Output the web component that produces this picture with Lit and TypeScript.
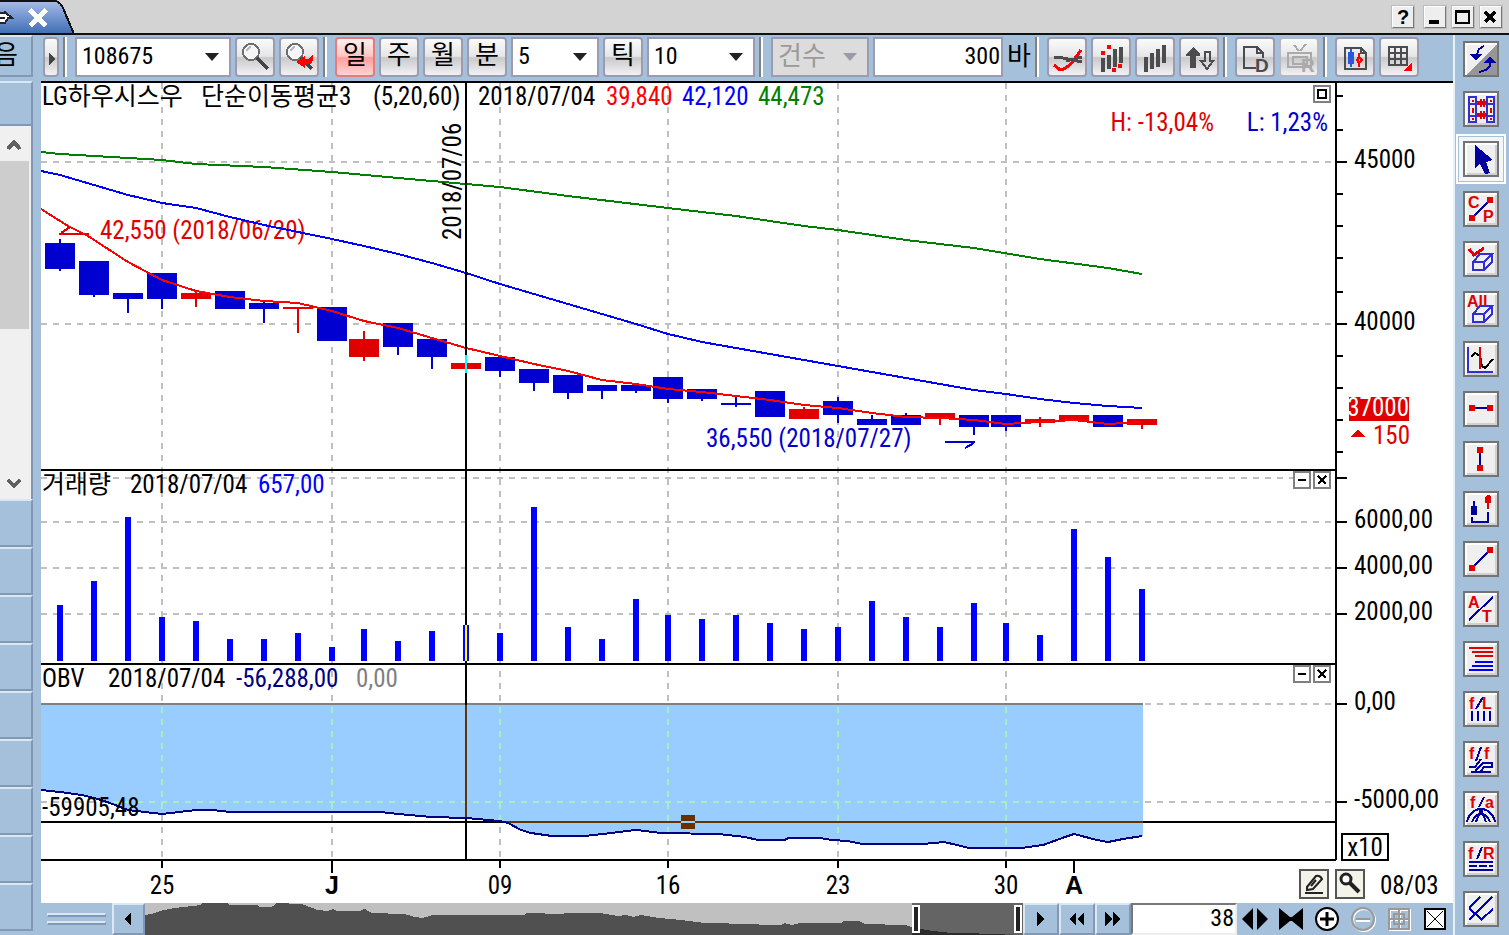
import { LitElement, html, svg, css, nothing } from "lit";
import { customElement, state } from "lit/decorators.js";
import { classMap } from "lit/directives/class-map.js";

type Candle = [x: number, top: number, bottom: number, high: number, low: number, up: 0 | 1];
type Point = [number, number];

const CANDLES: Candle[] = [
  [60, 243, 269, 239, 271, 0], [94, 261, 295, 261, 297, 0], [128, 293, 299, 293, 313, 0],
  [162, 273, 299, 273, 309, 0], [196, 293, 299, 290, 307, 1], [230, 291, 309, 291, 309, 0],
  [264, 303, 309, 301, 323, 0], [298, 307, 309, 307, 333, 1], [332, 307, 341, 307, 341, 0],
  [364, 339, 357, 331, 361, 1], [398, 323, 347, 323, 355, 0], [432, 339, 357, 339, 369, 0],
  [466, 363, 369, 355, 373, 1], [500, 357, 371, 357, 377, 0], [534, 369, 383, 369, 391, 0],
  [568, 375, 393, 375, 399, 0], [602, 385, 391, 385, 399, 0], [636, 385, 391, 383, 393, 0],
  [668, 377, 399, 377, 403, 0], [702, 389, 399, 389, 401, 0], [736, 403, 405, 397, 407, 0],
  [770, 391, 417, 391, 417, 0], [804, 409, 419, 407, 419, 1], [838, 401, 415, 397, 423, 0],
  [872, 419, 425, 415, 425, 0], [906, 415, 425, 413, 425, 0], [940, 413, 419, 413, 425, 1],
  [974, 415, 427, 415, 435, 0], [1006, 415, 427, 415, 431, 0], [1040, 419, 423, 417, 427, 1],
  [1074, 415, 421, 415, 421, 1], [1108, 415, 427, 415, 427, 0], [1142, 419, 425, 419, 429, 1],
];

const VOLUME_TOPS = [
  605, 581, 517, 617, 621, 639, 639, 633, 647, 629, 641, 631, 625, 633, 507, 627, 639, 599, 615, 619, 615,
  623, 629, 627, 601, 617, 627, 603, 623, 635, 529, 557, 589,
];

const MA5: Point[] = [
  [41, 209], [68, 226], [88, 236], [128, 262], [162, 280], [196, 291], [230, 297], [264, 301], [298, 303],
  [332, 311], [364, 321], [398, 328], [432, 338], [466, 348], [500, 356], [534, 364], [568, 371], [602, 380],
  [636, 384], [668, 389], [702, 392], [736, 396], [770, 400], [804, 405], [838, 408], [872, 413], [906, 417],
  [940, 418], [974, 420], [1006, 424], [1040, 422], [1074, 420], [1108, 424], [1142, 422],
];
const MA20: Point[] = [
  [41, 171], [60, 175], [94, 185], [128, 195], [162, 203], [196, 208], [230, 217], [264, 225], [298, 232],
  [332, 239], [364, 246], [398, 254], [432, 263], [466, 273], [500, 284], [534, 294], [568, 304], [602, 314],
  [636, 324], [668, 334], [702, 342], [736, 348], [770, 354], [804, 360], [838, 366], [872, 372], [906, 378],
  [940, 384], [974, 390], [1006, 394], [1040, 399], [1074, 403], [1108, 406], [1142, 408],
];
const MA60: Point[] = [
  [41, 152], [60, 154], [94, 156], [162, 160], [196, 164], [264, 167], [332, 172], [398, 178], [466, 184],
  [500, 187], [568, 196], [668, 208], [736, 216], [804, 226], [838, 230], [906, 240], [974, 248], [1040, 259],
  [1108, 268], [1142, 274],
];
const OBV: Point[] = [
  [41, 790], [60, 792], [82, 795], [98, 799], [110, 803], [128, 810], [145, 812], [162, 814], [196, 810],
  [213, 810], [230, 812], [380, 812], [398, 814], [432, 817], [466, 818], [500, 821], [508, 823], [521, 830],
  [531, 833], [552, 836], [585, 836], [611, 833], [627, 831], [636, 830], [645, 831], [661, 833], [719, 834],
  [745, 837], [758, 840], [785, 840], [788, 838], [820, 838], [832, 840], [847, 841], [863, 844], [923, 844],
  [944, 842], [957, 845], [969, 848], [1021, 848], [1043, 845], [1065, 837], [1074, 834], [1097, 840],
  [1108, 842], [1123, 839], [1142, 836],
];
const OVERVIEW: Point[] = [
  [145, 915], [152, 914], [160, 911], [175, 908], [201, 905], [203, 903], [227, 903], [230, 905], [258, 905],
  [260, 907], [272, 907], [277, 903], [302, 904], [310, 907], [318, 910], [328, 911], [333, 909], [337, 911],
  [360, 911], [365, 909], [372, 913], [405, 914], [415, 917], [423, 918], [433, 915], [525, 915], [527, 913],
  [563, 914], [565, 913], [600, 913], [619, 916], [627, 915], [634, 917], [641, 915], [660, 918], [682, 920],
  [705, 923], [755, 924], [765, 925], [782, 925], [785, 923], [793, 925], [800, 923], [842, 923], [844, 921],
  [860, 921], [866, 924], [906, 925], [913, 927], [922, 929], [934, 931], [953, 933], [1006, 934], [1024, 935],
];

const WEEKS: [number, string, boolean][] = [
  [162, "25", false], [332, "J", true], [500, "09", false], [668, "16", false],
  [838, "23", false], [1006, "30", false], [1074, "A", true],
];

const pts = (p: Point[]) => p.map((q) => q.join(",")).join(" ");

const eraser = (y: number) => svg`<path class="ln-b" d="M10 ${y + 8}h11v8h-11z M10 ${y + 8}l7 -8h12l-8 8 M29 ${y}v8l-8 8"/>`;

const TOOLS: [string, unknown][] = [
  ["화면 전환", svg`<path d="M34 3V34H4z" fill="#969696"/><path class="st-n" d="M21 5l-5 3l-2 5"/><path class="n" d="M6 13h13l-6 7z"/><path class="st-n" d="M16 31l7 -2l4 -4v-3"/><path class="n" d="M21 22h12l-6 -7z"/>`],
  ["차트 비교", svg`<path class="ln-b" d="M6 6h7v25h-7z M24 6h7v25h-7z M5 13h9 M5 25h9 M23 13h9 M23 25h9"/><path class="r" d="M9 9h2v2h-2z M9 17h2v5h-2z M9 27h2v2h-2z M27 9h2v2h-2z M27 17h2v5h-2z M27 27h2v2h-2z M14 10h3v-2h2v2h1v-2h2v2h1v4h-1v2h-2v-2h-1v2h-2v-2h-3z M14 22h3v-2h2v2h1v-2h2v2h1v4h-1v2h-2v-2h-1v2h-2v-2h-3z"/>`],
  ["선택", svg`<path class="n" d="M12 4V27L17 23L22 33L27 32L23 21L30 19z"/>`],
  ["가격 변화선", svg`<path class="st-n" d="M9 27L27 9"/><path class="r" d="M6 24h6v6h-6z M24 6h6v6h-6z"/><text class="glyph-r" x="5" y="17">C</text><text class="glyph-r" x="20" y="31">P</text>`],
  ["선택 삭제", svg`<path class="st-r" d="M6 8l5 6l10 -7"/>${eraser(13)}`],
  ["전체 삭제", svg`<text class="glyph-r" x="4" y="16">All</text>${eraser(15)}`],
  ["수직 기준선", svg`<path class="ln-b" d="M5 6V31H30"/><path d="M8 16l4 -4l5 3l2 10l3 2l8 -9" fill="none" stroke="#000" stroke-width="2"/><path class="r" d="M16 6h2v22h-2z"/>`],
  ["수평선", svg`<path class="st-n" d="M10 17H26"/><path class="r" d="M6 14h6v6h-6z M24 14h6v6h-6z"/>`],
  ["수직선", svg`<path class="st-n" d="M17 10V27"/><path class="r" d="M14 6h6v6h-6z M14 24h6v6h-6z"/>`],
  ["구간 표시", svg`<path class="st-n" d="M11 10v6 M9 26v5H25V21"/><path class="n" d="M8 15h6v9h-6z"/><path class="r" d="M24 4h2l2 2v6h-2v6h-2v-6h-2v-6z"/>`],
  ["추세선", svg`<path class="st-n" d="M9 27L27 9"/><path class="r" d="M6 24h6v6h-6z M24 6h6v6h-6z"/>`],
  ["문자 입력", svg`<path class="st-n" d="M6 29L30 6"/><text class="glyph-r" x="5" y="17">A</text><text class="glyph-r" x="19" y="31">T</text>`],
  ["가격대별 분할", svg`<path class="r" d="M6 6h24v2h-24z M9 10h21v2h-21z M12 14h18v2h-18z"/><path d="M12 20h18v2h-18z M9 24h21v2h-21z M6 28h24v2h-24z" fill="#00f"/>`],
  ["피보나치 라인", svg`<path class="st-n" d="M13 18L20 6 M9 20v10 M15 20v10 M21 20v10 M27 20v10"/><text class="glyph-r" x="6" y="18">f</text><text class="glyph-r" x="19" y="18">L</text>`],
  ["피보나치 팬", svg`<path class="st-n" d="M13 20L18 6 M6 26h6l6 -8 M8 31h20 M12 30l8 -8h9v4h-8l-3 4"/><text class="glyph-r" x="6" y="18">f</text><text class="glyph-r" x="21" y="18">f</text>`],
  ["피보나치 아크", svg`<path class="st-n" d="M16 16L21 6 M4 31c2 -9 8 -13 14 -13s12 4 14 13 M9 31c2 -5 5 -8 9 -8s7 3 9 8 M18 18l-5 13 M18 18l5 13"/><text class="glyph-r" x="7" y="17">f</text><text class="glyph-r" x="22" y="17">a</text>`],
  ["피보나치 되돌림", svg`<path class="st-n" d="M14 18L19 6 M6 21h24 M6 29h24"/><path class="st-n" d="M6 25h24" stroke-dasharray="8 2"/><text class="glyph-r" x="5" y="18">f</text><text class="glyph-r" x="20" y="18">R</text>`],
  ["평행선", svg`<path class="ln-n" d="M6 17L17 6 M6 29L29 6 M18 29L30 18 M6 17L19 29"/>`],
];

const lens = svg`<circle cx="14" cy="13" r="8" fill="#f6f6f6" stroke="#6e6e6e" stroke-width="2"/><path d="M10 12a5 5 0 0 1 4 -4" fill="none" stroke="#bbb" stroke-width="2"/><path d="M20 19l11 11" stroke="#444" stroke-width="4"/>`;

const ICONS = {
  next: svg`<path d="M4 14v12l6 -6z" fill="#444"/>`,
  search: lens,
  back: svg`${lens}<path d="M15 23l9 -6v3h4l4 -5v6l-2 4h-6v4z" fill="#f00"/>`,
  trend: svg`<path d="M5 26l5 4h5l7 -5l10 -14" fill="none" stroke="#f00" stroke-width="3"/><path d="M5 18l9 1l19 4 M17 22l16 -4" fill="none" stroke="#4c4c4c" stroke-width="3"/>`,
  signal: svg`<path d="M8 19h4v14h-4z M14 16h4v14h-4z M20 10h4v18h-4z M26 8h4v16h-4z" fill="#4c4c4c"/><path d="M14 6h4v4h-4z M8 12h4v4h-4z M25 25h4v4h-4z M19 29h4v4h-4z" fill="#f00"/>`,
  bars: svg`<path d="M7 18h4v15h-4z M13 14h4v16h-4z M19 10h4v18h-4z M25 6h4v18h-4z" fill="#4c4c4c"/>`,
  updown: svg`<path d="M12 8l7 7v2h-4v12h-6v-12h-4v-2z" fill="#4c4c4c"/><path d="M24 13h5v9h3l-6 8l-6 -8h4z" fill="none" stroke="#4c4c4c" stroke-width="2"/>`,
  docD: svg`<path d="M19 29H7V8h13l6 6v5 M20 8v6h6" fill="none" stroke="#4c4c4c" stroke-width="2"/><text class="badge" x="18" y="33">D</text>`,
  tvR: svg`<path d="M13 6l5 6 M25 5l-6 7 M7 14h23v14h-23z M12 18h14v7h-14z" fill="none" stroke="#aaa" stroke-width="2"/><text class="badge dim" x="20" y="33">R</text>`,
  docChart: svg`<path d="M8 9h16l5 5v16h-21z M24 9v5h5" fill="none" stroke="#4c4c4c" stroke-width="2"/><path d="M13 10h2v3h2v12h-2v3h-2v-3h-2v-12h2z" fill="#2a56e0"/><path d="M22 14v4 M22 24v4 M20 21l2 -3l3 3l-3 3z" fill="none" stroke="#f00" stroke-width="2"/>`,
  grid: svg`<path d="M8 8h18v18h-18z M14 8v18 M20 8v18 M8 14h18 M8 20h18" fill="none" stroke="#4c4c4c" stroke-width="2"/><path d="M31 23v9h-9z" fill="#f00"/>`,
};

@customElement("app-root")
export class AppRoot extends LitElement {
  @state() private tool = 2;
  @state() private period = "일";

  static styles = css`
    :host {
      --panel: #a4c0da;
      --edge: #8298b4;
      --light: #dbe7f3;
      display: flex;
      flex-direction: column;
      min-height: 100vh;
      background: var(--panel);
      color: #000;
      font: 400 24px "Roboto Condensed", "Noto Sans CJK KR", sans-serif;
    }
    * { box-sizing: border-box; }
    svg { display: block; }
    button { margin: 0; padding: 0; font: inherit; color: inherit; cursor: pointer; }
    button svg { shape-rendering: crispEdges; }

    .titlebar { display: flex; height: 35px; background: #d3d3d3; border-bottom: 2px solid #111; }
    .tab { width: 76px; height: 35px; flex: none; padding: 0; border: 0; background: none; }
    .window { display: flex; flex: 1; justify-content: flex-end; gap: 4px; padding: 5px 6px 0 0; }
    .win { width: 24px; height: 24px; background: #eee; border: 2px solid; border-color: #fff #777 #777 #fff; outline: 1px solid #bbb; outline-offset: -1px; }
    .help { margin-right: 4px; font: 700 20px/20px "Liberation Sans", sans-serif; }

    .body { display: flex; flex: 1; }
    .left { width: 41px; flex: none; display: flex; flex-direction: column; padding-right: 8px; }
    .cell { flex: none; height: 48px; border: 0 solid; border-width: 2px 2px 2px 0; border-color: var(--light) var(--edge) var(--edge); background: none; overflow: hidden; }
    .cell.label { height: 42px; margin-bottom: 4px; display: flex; justify-content: flex-end; align-items: center; padding: 0 13px 2px 0; font-size: 26px; line-height: 30px; }
    .cell.short { height: 45px; }
    .scroll { display: flex; flex-direction: column; height: 373px; background: #f0f0f0; border-right: 2px solid var(--edge); padding-right: 2px; }
    .scroll button { height: 35px; border: 0; background: none; }
    .thumb { height: 168px; background: #cdcdcd; margin-bottom: auto; }

    .main { flex: 1; min-width: 0; display: flex; flex-direction: column; }
    .toolbar { display: flex; gap: 4px; height: 46px; padding: 2px 2px 4px; align-items: center; }
    .tb { width: 40px; height: 40px; flex: none; display: grid; place-items: center; border: 2px solid #9c9cae; border-radius: 4px; background: linear-gradient(#fafafa, #e6e6e8 48%, #c9c9cc 52%, #f2f2f4); overflow: hidden; }
    .tb.period { font-size: 26px; line-height: 30px; padding-bottom: 4px; }
    .tb.slim { width: 16px; }
    .tb.on { border-color: #e47c7c; background: linear-gradient(#fff0f0, #ffc4c4 48%, #ff9c9c 52%, #ffd4d4); }
    .tb:disabled { border-color: #b8b8c4; }
    .sep { width: 4px; height: 40px; flex: none; background: linear-gradient(90deg, #808080 50%, #fff 50%); }
    .sep.wide { margin-right: 4px; }
    .badge { font: 700 19px "Liberation Sans", sans-serif; fill: #4c4c4c; }
    .badge.dim { fill: #aaa; }
    .pick { display: grid; flex: none; align-items: center; }
    .pick > * { grid-area: 1 / 1; }
    .pick svg { justify-self: end; margin-right: 12px; pointer-events: none; }
    .pick.code { width: 156px; }
    .pick.minute { width: 88px; }
    .pick.tick { width: 108px; }
    .pick.count { width: 98px; }
    select, input { appearance: none; width: 100%; height: 40px; margin: 0; padding: 0 5px; border: 2px solid #9c9cae; border-radius: 0; background: #fff; font: inherit; color: #000; }
    .code select, .minute select, .tick select, .bars { padding-bottom: 3px; }
    select:disabled { background: #dcdcdc; color: #9a9a9a; opacity: 1; font-size: 26px; padding-bottom: 2px; }
    .bars { width: 130px; flex: none; text-align: right; padding-right: 1px; }
    .unit { width: 24px; font-size: 26px; line-height: 36px; padding-bottom: 3px; }

    .chart { background: #fff; border-top: 2px solid #000; font-size: 25px; }
    .pane { position: relative; }
    .pane > svg { width: 100%; height: auto; shape-rendering: crispEdges; }
    .pane text { font-size: 25px; }
    .head { position: absolute; top: 0; left: 1px; display: flex; gap: 8px; line-height: 28px; white-space: nowrap; }
    .t0 { width: 151px; }
    .t1 { width: 164px; }
    .args { width: 97px; }
    .t2 { width: 80px; }
    .t3 { width: 58px; }
    .date { width: 120px; }
    .val { width: 68px; }
    .long { width: 112px; }
    .red { color: #f00; }
    .blue { color: #00f; }
    .green { color: #008000; }
    .navy { color: #000080; }
    .gray { color: #808080; }
    .corner { position: absolute; top: 0; right: 122px; display: flex; gap: 2px; }
    .corner.price { top: 2px; }
    .mini { width: 18px; height: 18px; border: 2px solid #808080; background: #fff; }
    .foot { position: absolute; top: 8px; right: 88px; display: flex; gap: 6px; }
    .sq { width: 30px; height: 30px; border: 2px solid #555; background: #f4f3ea; }
    .sq svg { shape-rendering: auto; }

    .gridline { stroke: #c0c0c0; stroke-width: 2; stroke-dasharray: 6 6; }
    .gridline.tint { stroke: #a6f0c0; }
    .ax { stroke: #000; stroke-width: 2; fill: none; }
    .line { fill: none; stroke-width: 2; }
    .up { fill: #e00000; }
    .down { fill: #0000d0; }
    .mid { text-anchor: middle; }
    .end { text-anchor: end; }
    .strong { font: 700 22px "Liberation Sans", sans-serif; }
    .white { fill: #fff; }

    .bottom { display: flex; height: 32px; }
    .grip { width: 71px; flex: none; display: flex; flex-direction: column; justify-content: center; gap: 4px; padding: 0 6px; }
    .grip i { display: block; height: 4px; border: 1px solid; border-color: var(--light) var(--edge) var(--edge) var(--light); border-width: 2px 1px; }
    .nav { width: 36px; flex: none; display: grid; place-items: center; border: 2px solid; border-color: var(--light) var(--edge) var(--edge) var(--light); background: var(--panel); }
    .nav.first { width: 33px; }
    .overview { flex: 1; min-width: 0; }
    .overview svg { width: 100%; height: 32px; shape-rendering: crispEdges; }
    .shown { width: 106px; height: 32px; flex: none; padding: 0 1px 3px; text-align: right; border: 2px solid; border-color: #777 #eee #eee #777; }
    .views { display: flex; }
    .view { width: 36px; border: 0; background: none; display: grid; place-items: center; }
    .view svg { shape-rendering: auto; }

    .right { width: 56px; flex: none; display: flex; flex-direction: column; gap: 14px; padding: 6px 0 0 8px; border-left: 2px solid #e8f0f8; }
    .tool { width: 36px; height: 36px; flex: none; border: 2px solid #737373; background: #efefef; box-shadow: inset 2px 2px #fff, inset -2px -2px #d0d0d0; }
    .tool svg { margin: -2px; }
    .tool.on { box-shadow: inset 2px 2px #fff, inset -2px -2px #d0d0d0, 0 0 0 4px #f3f7fa, 0 0 0 5px #a4c0da, 0 0 0 7px #fff; }
    .glyph-r { font: 700 16px "Liberation Sans", sans-serif; fill: #e00000; }
    .n { fill: #0000a0; }
    .r { fill: #e00000; }
    .st-n { fill: none; stroke: #0000a0; stroke-width: 2; }
    .ln-n { fill: none; stroke: #0000c0; stroke-width: 2; }
    .ln-b { fill: none; stroke: #3030d0; stroke-width: 2; }
    .st-r { fill: none; stroke: #e00000; stroke-width: 3; }
  `;

  private tb(label: string, icon: unknown, extra: { slim?: boolean; off?: boolean } = {}) {
    const w = extra.slim ? 16 : 40;
    return html`<button class=${classMap({ tb: true, slim: !!extra.slim })} aria-label=${label} ?disabled=${extra.off}>
      <svg width=${w} height="40" viewBox="0 0 ${w} 40">${icon}</svg></button>`;
  }

  private periodButton(name: string) {
    return html`<button class=${classMap({ tb: true, period: true, on: this.period === name })} @click=${() => (this.period = name)}>${name}</button>`;
  }

  private pick(kind: string, label: string, value: string, off = false) {
    return html`<span class="pick ${kind}">
      <select aria-label=${label} ?disabled=${off}><option>${value}</option></select>
      <svg width="14" height="8" viewBox="0 0 14 8"><path d="M0 0h14l-7 8z" fill=${off ? "#9a9aac" : "#222"}/></svg></span>`;
  }

  private grid() {
    return WEEKS.filter((w) => w[1] !== "A").map(([x]) => svg`<line class="gridline" x1=${x} x2=${x} y1="83" y2="860"/>`);
  }

  private rows(ys: number[]) {
    return ys.map((y) => svg`<line class="gridline" x1="41" x2="1335" y1=${y} y2=${y}/><line class="ax" x1="1336" x2="1347" y1=${y} y2=${y}/>`);
  }

  private frame(bottom: number) {
    return svg`<path class="ax" d="M41 ${bottom}H1336 M1336 83V860"/><path class="ax" d="M466 83V860"/>`;
  }

  private closeButtons(name: string) {
    return html`<div class="corner">
      <button class="mini" aria-label="${name} 최소화"><svg width="14" height="14"><path d="M3 6h8v2h-8z"/></svg></button>
      <button class="mini" aria-label="${name} 닫기"><svg width="14" height="14"><path d="M3 3l8 8M11 3l-8 8" stroke="#000" stroke-width="2"/></svg></button>
    </div>`;
  }

  private pricePane() {
    return html`<section class="pane">
      <svg viewBox="41 83 1412 388" role="img" aria-label="가격 차트">
        ${this.grid()}${this.rows([162, 324])}
        ${[96, 130, 194, 226, 258, 292, 356, 388, 420, 452].map((y) => svg`<line class="ax" x1="1336" x2="1343" y1=${y} y2=${y}/>`)}
        <text class="up" x="100" y="239">42,550 (2018/06/20)</text>
        <path class="line" stroke="#e00000" d="M59 234H89 M61 233L70 227L76 230"/>
        <text class="down" x="706" y="447">36,550 (2018/07/27)</text>
        <path class="line" stroke="#0000d0" d="M945 442H975 M974 443L965 448"/>
        ${CANDLES.map(([x, t, b, h, l, up]) => svg`<rect class=${up ? "up" : "down"} x=${x - 15} y=${t} width="30" height=${b - t}/><rect class=${up ? "up" : "down"} x=${x - 1} y=${h} width="2" height=${l - h}/>`)}
        <polyline class="line" stroke="#008000" points=${pts(MA60)}/>
        <polyline class="line" stroke="#00f" points=${pts(MA20)}/>
        <polyline class="line" stroke="#f00" points=${pts(MA5)}/>
        ${this.frame(470)}
        <rect x="465" y="355" width="2" height="18" fill="#0ff"/>
        <text transform="translate(461 240) rotate(-90)">2018/07/06</text>
        <text class="up end" x="1214" y="131">H: -13,04%</text>
        <text class="down end" x="1328" y="131">L: 1,23%</text>
        <text x="1354" y="168">45000</text>
        <text x="1354" y="330">40000</text>
        <rect class="up" x="1349" y="397" width="60" height="24"/>
        <text class="white end" x="1409" y="416">37000</text>
        <path class="up" d="M1351 437h14l-7 -8z"/>
        <text class="up end" x="1410" y="444">150</text>
      </svg>
      <div class="head"><span class="t0">LG하우시스우</span><span class="t1">단순이동평균3</span><span class="args">(5,20,60)</span><span class="date">2018/07/04</span><span class="val red">39,840</span><span class="val blue">42,120</span><span class="val green">44,473</span></div>
      <div class="corner price"><button class="mini" aria-label="가격 최대화"><svg width="14" height="14"><path d="M3 3h8v8h-8z" fill="none" stroke="#000" stroke-width="2"/></svg></button></div>
    </section>`;
  }

  private volumePane() {
    return html`<section class="pane">
      <svg viewBox="41 471 1412 194" role="img" aria-label="거래량 차트">
        ${this.grid()}${this.rows([478, 522, 568, 614])}
        ${VOLUME_TOPS.map((y, i) => svg`<rect x=${CANDLES[i][0] - 3} y=${y} width="6" height=${661 - y} fill="#00f"/>`)}
        ${this.frame(664)}
        <rect x="465" y="625" width="2" height="36" fill="#ff0"/>
        <text x="1354" y="528">6000,00</text><text x="1354" y="574">4000,00</text><text x="1354" y="620">2000,00</text>
      </svg>
      <div class="head"><span class="t2">거래량</span><span class="date">2018/07/04</span><span class="blue">657,00</span></div>
      ${this.closeButtons("거래량")}
    </section>`;
  }

  private obvPane() {
    const area = `41,704 ${pts(OBV)} 1143,836 1143,704`;
    return html`<section class="pane">
      <svg viewBox="41 665 1412 196" role="img" aria-label="OBV 차트">
        <defs><clipPath id="fill"><polygon points=${area}/></clipPath></defs>
        ${this.grid()}${this.rows([704, 802])}
        <polygon points=${area} fill="#99ccff"/>
        <g clip-path="url(#fill)">
          ${WEEKS.filter((w) => w[1] !== "A").map(([x]) => svg`<line class="gridline tint" x1=${x} x2=${x} y1="83" y2="860"/>`)}
          <line class="gridline tint" x1="41" x2="1335" y1="802" y2="802"/>
        </g>
        <line class="line" stroke="#808080" x1="41" x2="1143" y1="704" y2="704"/>
        ${this.frame(860)}
        <path class="ax" d="M41 822H1336"/>
        <g clip-path="url(#fill)"><path class="line" stroke="#663300" d="M41 822H1143 M466 705V860"/></g>
        <polyline class="line" stroke="#000080" points=${pts(OBV)}/>
        <path d="M681 815h14v6h-14z M681 823h14v6h-14z" fill="#663300"/><path d="M681 821h14v2h-14z" fill="#99ccff"/>
        <text x="42" y="816">-59905,48</text>
        <text x="1354" y="710">0,00</text><text x="1354" y="808">-5000,00</text>
        <rect class="ax" x="1342" y="834" width="46" height="26"/>
        <text class="mid" x="1365" y="856">x10</text>
      </svg>
      <div class="head"><span class="t3">OBV</span><span class="date">2018/07/04</span><span class="long navy">-56,288,00</span><span class="gray">0,00</span></div>
      ${this.closeButtons("OBV")}
    </section>`;
  }

  private axisPane() {
    return html`<section class="pane">
      <svg viewBox="41 861 1412 42" role="img" aria-label="날짜 축">
        ${WEEKS.map(([x, label, strong]) => svg`<line class="ax" x1=${x} x2=${x} y1="861" y2=${strong ? 873 : 868}/><text class="mid ${strong ? "strong" : ""}" x=${x} y="894">${label}</text>`)}
        <text x="1380" y="894">08/03</text>
      </svg>
      <div class="foot">
        <button class="sq" aria-label="편집"><svg width="26" height="26"><path d="M6 16l9 -11q4 -1 6 3l-9 10l-6 1z M10 15l5 -6 M4 22h18" fill="none" stroke="#222" stroke-width="2"/></svg></button>
        <button class="sq" aria-label="확대"><svg width="26" height="26"><circle cx="9" cy="8" r="5" fill="#fff" stroke="#222" stroke-width="3"/><path d="M13 12l9 9" stroke="#222" stroke-width="4"/></svg></button>
      </div>
    </section>`;
  }

  private nav(label: string, d: string, first = false) {
    return html`<button class=${classMap({ nav: true, first })} aria-label=${label}><svg width="18" height="16"><path d=${d}/></svg></button>`;
  }

  private bottomBar() {
    const views: [string, unknown][] = [
      ["간격 넓히기", svg`<path d="M11 2v22l-11 -11z M15 2v22l11 -11z"/>`],
      ["간격 좁히기", svg`<path d="M1 2v22l11 -9h2l11 9v-22l-11 9h-2z"/>`],
      ["확대", svg`<circle cx="13" cy="13" r="11" fill="#fff" stroke="#000" stroke-width="2"/><path d="M6 13h14M13 6v14" stroke="#000" stroke-width="3"/>`],
      ["축소", svg`<circle cx="14" cy="14" r="11" fill="none" stroke="#fff" stroke-width="2"/><circle cx="13" cy="13" r="11" fill="none" stroke="#999" stroke-width="2"/><path d="M6 15h14" stroke="#fff" stroke-width="2"/><path d="M6 13h14" stroke="#999" stroke-width="2"/>`],
      ["전체 보기", svg`<path d="M4 4h20v20h-20z M4 14h20M14 4v20" fill="none" stroke="#fff" stroke-width="2"/><path d="M3 3h20v20h-20z M3 13h20M13 3v20 M8 8v10h10v-10z" fill="none" stroke="#999" stroke-width="2"/>`],
      ["닫기", svg`<path d="M3 3h20v20h-20z" fill="#fff" stroke="#000" stroke-width="2"/><path d="M5 5l16 16M21 5l-16 16" stroke="#000" stroke-width="1"/>`],
    ];
    return html`<footer class="bottom">
      <div class="grip"><i></i><i></i></div>
      ${this.nav("이전", "M11 1v14l-7 -7z", true)}
      <div class="overview"><svg viewBox="145 903 879 32" preserveAspectRatio="none">
        <rect x="145" y="903" width="879" height="32" fill="#c0c0c0"/>
        <rect x="913" y="903" width="111" height="32" fill="#646464"/>
        <polygon points="${pts(OVERVIEW)} 145,935" fill="#505050"/>
        <path d="M913 928L922 929L934 931L953 933L1006 934V935H913z" fill="#2c2c2c"/>
        <path d="M914 906h6v26h-6z M1016 906h6v26h-6z" fill="#222" stroke="#fff" stroke-width="2"/>
      </svg></div>
      ${this.nav("다음", "M5 1v14l7 -7z")}${this.nav("빠르게 뒤로", "M8 1v14l-7 -7z M16 1v14l-7 -7z")}${this.nav("빠르게 앞으로", "M1 1v14l7 -7z M9 1v14l7 -7z")}
      <input class="shown" aria-label="표시 개수" value="38" />
      <div class="views">${views.map(([label, icon]) => html`<button class="view" aria-label=${label}><svg width="26" height="26">${icon}</svg></button>`)}</div>
    </footer>`;
  }

  render() {
    return html`
      <header class="titlebar">
        <button class="tab" aria-label="탭 닫기"><svg width="76" height="35">
          <defs><linearGradient id="tabfill" x2="0" y2="1"><stop stop-color="#a6bce8"/><stop offset="1" stop-color="#3f6db4"/></linearGradient></defs>
          <path d="M-2 1H54Q60 1 63 8L74 34H-2z" fill="url(#tabfill)" stroke="#111" stroke-width="2"/>
          <path d="M-2 13h7v-2l1 2l6 5h-4l-3 5h-7 M0 18h5" fill="#fff" stroke="#223" stroke-width="2"/>
          <path d="M30 10l16 16M46 10l-16 16" stroke="#fff" stroke-width="5"/></svg></button>
        <div class="window">
          <button class="win help" aria-label="도움말">?</button>
          <button class="win" aria-label="최소화"><svg width="20" height="20"><path d="M4 13h10v4h-10z"/></svg></button>
          <button class="win" aria-label="최대화"><svg width="20" height="20"><path d="M3 4h13v12h-13z" fill="none" stroke="#000" stroke-width="2"/><path d="M2 3h15v3h-15z"/></svg></button>
          <button class="win" aria-label="닫기"><svg width="20" height="20"><path d="M4 5l10 10M14 5l-10 10" stroke="#000" stroke-width="3"/></svg></button>
        </div>
      </header>
      <div class="body">
        <aside class="left">
          <button class="cell label">음</button>
          <div class="cell short"></div>
          <div class="scroll">
            <button aria-label="위로"><svg width="29" height="35"><path d="M8 23l6 -7l6 7" fill="none" stroke="#606060" stroke-width="4"/></svg></button>
            <div class="thumb"></div>
            <button aria-label="아래로"><svg width="29" height="35"><path d="M8 16l6 6l6 -6" fill="none" stroke="#606060" stroke-width="4"/></svg></button>
          </div>
          ${Array.from({ length: 9 }, () => html`<div class="cell"></div>`)}
        </aside>
        <main class="main">
          <div class="toolbar">
            ${this.tb("펼치기", ICONS.next, { slim: true })}<i class="sep wide"></i>
            ${this.pick("code", "종목 코드", "108675")}${this.tb("종목 검색", ICONS.search)}${this.tb("이전 종목", ICONS.back)}
            <i class="sep wide"></i>
            ${["일", "주", "월", "분"].map((p) => this.periodButton(p))}
            ${this.pick("minute", "분 간격", "5")}${this.periodButton("틱")}${this.pick("tick", "틱 간격", "10")}
            <i class="sep wide"></i>
            ${this.pick("count", "조회 기준", "건수", true)}
            <input id="bars" class="bars" value="300" /><label class="unit" for="bars">바</label>
            <i class="sep wide"></i>
            ${this.tb("추세", ICONS.trend)}${this.tb("신호", ICONS.signal)}${this.tb("봉", ICONS.bars)}${this.tb("정렬", ICONS.updown)}
            <i class="sep wide"></i>
            ${this.tb("문서", ICONS.docD)}${this.tb("방송", ICONS.tvR, { off: true })}
            <i class="sep wide"></i>
            ${this.tb("차트 문서", ICONS.docChart)}${this.tb("표", ICONS.grid)}
          </div>
          <div class="chart">${this.pricePane()}${this.volumePane()}${this.obvPane()}${this.axisPane()}</div>
          ${this.bottomBar()}
        </main>
        <nav class="right">
          ${TOOLS.map(([label, icon], i) => html`<button class=${classMap({ tool: true, on: this.tool === i })} aria-label=${label} aria-pressed=${this.tool === i ? "true" : nothing} @click=${() => (this.tool = i)}><svg width="36" height="36">${icon}</svg></button>`)}
        </nav>
      </div>`;
  }
}
